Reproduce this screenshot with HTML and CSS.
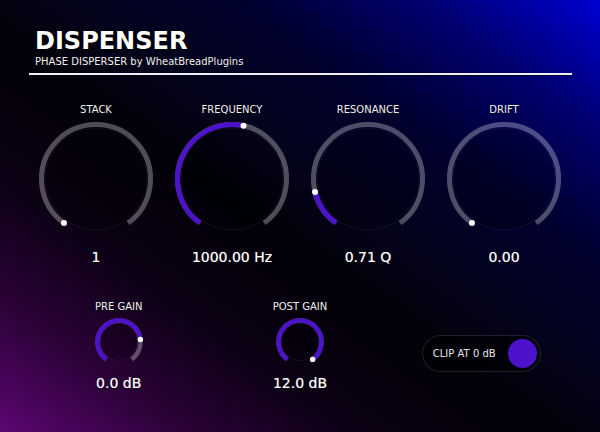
FILE: index.html
```html
<!DOCTYPE html>
<html>
<head>
<meta charset="utf-8">
<link rel="stylesheet" href="styles.css">
</head>
<body>
<div class="app">
  <header class="header">
    <h1 class="title">DISPENSER</h1>
    <div class="subtitle">PHASE DISPERSER by WheatBreadPlugins</div>
    <div class="rule"></div>
  </header>

  <section class="big-row">
    <div class="knob">
      <div class="label">STACK</div>
      <svg class="big-svg" width="120" height="120" viewBox="0 0 120 120">
        <circle class="body" cx="60" cy="60" r="51"/>
        <path class="track" d="M27.97 104.09 A54.5 54.5 0 1 1 92.03 104.09"/>
        <circle class="dot" cx="27.97" cy="104.09" r="3"/>
      </svg>
      <div class="value">1</div>
    </div>
    <div class="knob">
      <div class="label">FREQUENCY</div>
      <svg class="big-svg" width="120" height="120" viewBox="0 0 120 120">
        <circle class="body" cx="60" cy="60" r="51"/>
        <path class="track" d="M27.97 104.09 A54.5 54.5 0 1 1 92.03 104.09"/>
        <path class="fill" d="M27.97 104.09 A54.5 54.5 0 0 1 71.52 6.73"/>
        <circle class="dot" cx="71.52" cy="6.73" r="3"/>
      </svg>
      <div class="value">1000.00 Hz</div>
    </div>
    <div class="knob">
      <div class="label">RESONANCE</div>
      <svg class="big-svg" width="120" height="120" viewBox="0 0 120 120">
        <circle class="body" cx="60" cy="60" r="51"/>
        <path class="track" d="M27.97 104.09 A54.5 54.5 0 1 1 92.03 104.09"/>
        <path class="fill" d="M27.97 104.09 A54.5 54.5 0 0 1 7.05 72.91"/>
        <circle class="dot" cx="7.05" cy="72.91" r="3"/>
      </svg>
      <div class="value">0.71 Q</div>
    </div>
    <div class="knob">
      <div class="label">DRIFT</div>
      <svg class="big-svg" width="120" height="120" viewBox="0 0 120 120">
        <circle class="body" cx="60" cy="60" r="51"/>
        <path class="track" d="M27.97 104.09 A54.5 54.5 0 1 1 92.03 104.09"/>
        <circle class="dot" cx="27.97" cy="104.09" r="3"/>
      </svg>
      <div class="value">0.00</div>
    </div>
  </section>

  <section class="small-row">
    <div class="knob small">
      <div class="label">PRE GAIN</div>
      <svg class="small-svg" width="50" height="50" viewBox="0 0 50 50">
        <circle class="body" cx="25" cy="25" r="18.5"/>
        <path class="track small-stroke" d="M12.36 42.39 A21.5 21.5 0 1 1 37.64 42.39"/>
        <path class="fill small-stroke" d="M12.36 42.39 A21.5 21.5 0 1 1 46.34 22.38"/>
        <circle class="dot" cx="46.34" cy="22.38" r="2.7"/>
      </svg>
      <div class="value small-value">0.0 dB</div>
    </div>
    <div class="knob small">
      <div class="label">POST GAIN</div>
      <svg class="small-svg" width="50" height="50" viewBox="0 0 50 50">
        <circle class="body" cx="25" cy="25" r="18.5"/>
        <path class="track small-stroke" d="M12.36 42.39 A21.5 21.5 0 1 1 37.64 42.39"/>
        <path class="fill small-stroke" d="M12.36 42.39 A21.5 21.5 0 1 1 37.64 42.39"/>
        <circle class="dot" cx="37.64" cy="42.39" r="2.7"/>
      </svg>
      <div class="value small-value">12.0 dB</div>
    </div>
    <div class="toggle-cell">
      <div class="toggle">
        <span class="toggle-text">CLIP AT 0 dB</span>
        <span class="toggle-dot"></span>
      </div>
    </div>
  </section>
</div>
</body>
</html>
```

FILE: styles.css
```css
html, body {
  margin: 0;
  padding: 0;
}

body {
  width: 600px;
  height: 432px;
  overflow: hidden;
  font-family: "DejaVu Sans", Verdana, sans-serif;
  color: #f2f2f2;
  background: linear-gradient(to top right,
    #5c0672 0%,
    #2c0238 15%,
    #0b0114 30%,
    #020108 46%,
    #04031a 55%,
    #00002e 70%,
    #000070 85%,
    #0000d2 100%);
}

.app {
  padding: 27px 28px 0;
  width: 544px;
}

.title {
  margin: 0;
  padding-left: 7px;
  font-size: 24px;
  line-height: 28px;
  font-weight: bold;
  color: #ffffff;
  text-shadow: 0 0 2px #000, 1px 1px 2px rgba(0, 0, 0, 0.9);
}

.subtitle {
  margin-top: 1px;
  padding-left: 7px;
  font-size: 10px;
  line-height: 12px;
  color: #f0f0f0;
  text-shadow: 0 1px 1px rgba(0, 0, 0, 0.8);
}

.rule {
  margin-top: 5px;
  margin-left: 1px;
  height: 2px;
  background: #eeeeff;
  box-shadow: 0 1px 1px rgba(0, 0, 0, 0.6);
}

.big-row {
  margin-top: 29px;
  display: grid;
  grid-template-columns: repeat(4, 136px);
}

.knob {
  display: flex;
  flex-direction: column;
  align-items: center;
}

.label {
  font-size: 10px;
  line-height: 12px;
  color: #f0f0f0;
  text-shadow: 0 1px 2px rgba(0, 0, 0, 0.8);
}

.big-svg {
  display: block;
  margin-top: 3px;
}

.value {
  margin-top: 10px;
  font-size: 14px;
  line-height: 17px;
  color: #ffffff;
  text-shadow: 0 0 1px rgba(255, 255, 255, 0.5), 0 1px 2px rgba(0, 0, 0, 0.9);
}

.body {
  fill: rgba(0, 0, 0, 0.18);
  stroke: rgba(255, 255, 255, 0.06);
  stroke-width: 1;
}

.track {
  fill: none;
  stroke: rgba(255, 255, 255, 0.3);
  stroke-width: 5;
}

.fill {
  fill: none;
  stroke: #4c12cc;
  stroke-width: 5;
}

.small-stroke {
  stroke-width: 4.5;
}

.dot {
  fill: #ffffff;
}

.small-row {
  margin-top: 35px;
  display: grid;
  grid-template-columns: repeat(3, 1fr);
  width: 544px;
}

.small-svg {
  display: block;
  margin-top: 4px;
}

.small-value {
  margin-top: 8px;
}

.toggle-cell {
  display: flex;
  justify-content: center;
  align-items: flex-start;
  padding-top: 34px;
}

.toggle {
  box-sizing: border-box;
  width: 119px;
  height: 37px;
  border-radius: 19px;
  border: 1px solid rgba(255, 255, 255, 0.12);
  background: rgba(0, 0, 0, 0.45);
  display: flex;
  align-items: center;
  justify-content: space-between;
  padding-left: 10px;
  padding-right: 3px;
}

.toggle-text {
  font-size: 10px;
  line-height: 12px;
  color: #e4e4e4;
}

.toggle-dot {
  width: 29px;
  height: 29px;
  border-radius: 50%;
  background: #4c12cc;
}
```
